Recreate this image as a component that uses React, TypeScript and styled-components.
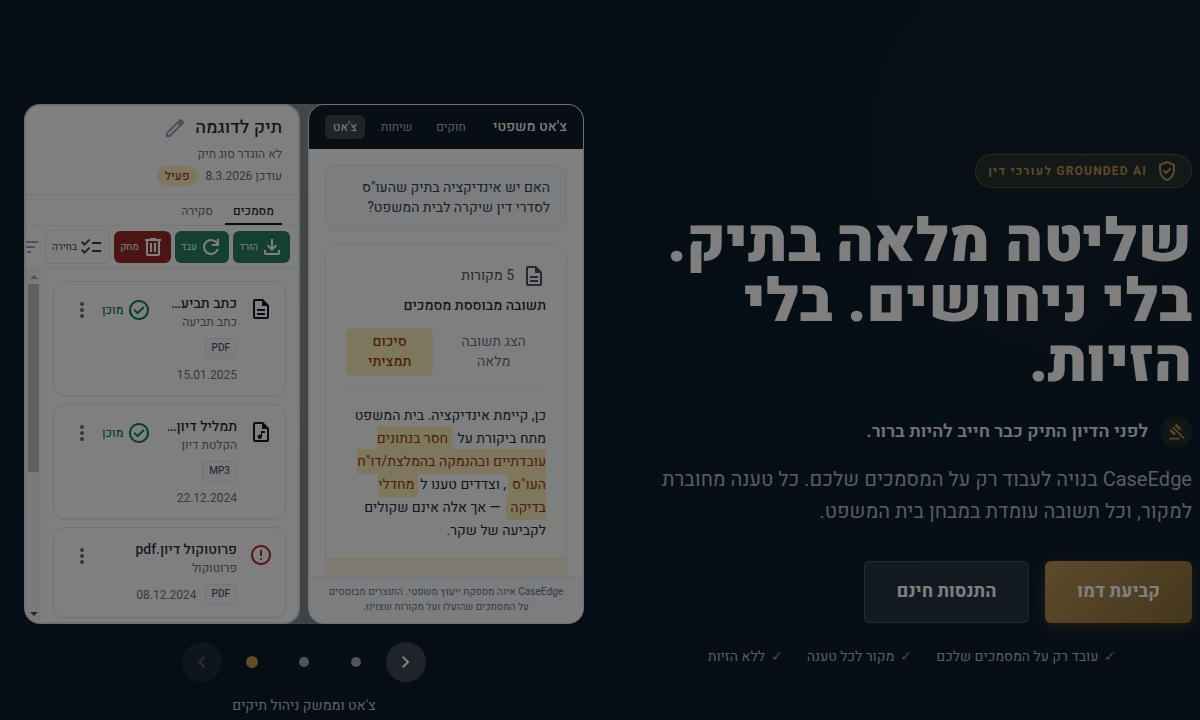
import React from "react";
import styled, { createGlobalStyle, css } from "styled-components";

const GlobalStyle = createGlobalStyle`
  *, *::before, *::after { box-sizing: border-box; }
  body {
    margin: 0;
    background: #0e1d2a;
    font-family: Heebo, Roboto, "Open Sans", sans-serif;
  }
  h1, h2, h3, p, ul { margin: 0; padding: 0; }
  ul { list-style: none; }
  button { font-family: inherit; border: 0; padding: 0; background: none; color: inherit; cursor: pointer; }
`;

const ICONS = {
  edit: "M200-200h57l391-391-57-57-391 391v57Zm-80 80v-170l528-527q12-11 26.5-17t30.5-6q16 0 31 6t26 18l55 56q12 11 17.5 26t5.5 30q0 16-5.5 30.5T817-647L290-120H120Zm640-584-56-56 56 56Zm-141 85-28-29 57 57-29-28Z",
  download: "M480-320 280-520l56-58 104 104v-326h80v326l104-104 56 58-200 200ZM240-160q-33 0-56.5-23.5T160-240v-120h80v120h480v-120h80v120q0 33-23.5 56.5T720-160H240Z",
  refresh: "M480-160q-134 0-227-93t-93-227q0-134 93-227t227-93q69 0 132 28.5T720-690v-110h80v280H520v-80h168q-32-56-87.5-88T480-720q-100 0-170 70t-70 170q0 100 70 170t170 70q77 0 139-44t87-116h84q-28 106-114 173t-196 67Z",
  trash: "M280-120q-33 0-56.5-23.5T200-200v-520h-40v-80h200v-40h240v40h200v80h-40v520q0 33-23.5 56.5T680-120H280Zm400-600H280v520h400v-520ZM360-280h80v-360h-80v360Zm160 0h80v-360h-80v360Z",
  checklist: "M222-200 80-342l56-56 85 85 170-170 56 57-225 226Zm0-320L80-662l56-56 85 85 170-170 56 57-225 226Zm298 240v-80h360v80H520Zm0-320v-80h360v80H520Z",
  filter: "M400-240v-80h160v80H400ZM240-440v-80h480v80H240ZM120-640v-80h720v80H120Z",
  document: "M320-240h320v-80H320v80Zm0-160h320v-80H320v80ZM240-80q-33 0-56.5-23.5T160-160v-640q0-33 23.5-56.5T240-880h320l240 240v480q0 33-23.5 56.5T720-80H240Zm280-520v-200H240v640h480v-440H520Z",
  audio: "M430-200q38 0 64-26t26-64v-150h120v-80H480v155q-11-8-23.5-11.5T430-380q-38 0-64 26t-26 64q0 38 26 64t64 26ZM240-80q-33 0-56.5-23.5T160-160v-640q0-33 23.5-56.5T240-880h320l240 240v480q0 33-23.5 56.5T720-80H240Zm280-520v-200H240v640h480v-440H520Z",
  check: "m424-296 282-282-56-56-226 226-114-114-56 56 170 170Zm56 216q-83 0-156-31.5T197-197q-54-54-85.5-127T80-480q0-83 31.5-156T197-763q54-54 127-85.5T480-880q83 0 156 31.5T763-763q54 54 85.5 127T880-480q0 83-31.5 156T763-197q-54 54-127 85.5T480-80Zm0-80q134 0 227-93t93-227q0-134-93-227t-227-93q-134 0-227 93t-93 227q0 134 93 227t227 93Z",
  error: "M480-280q17 0 28.5-11.5T520-320q0-17-11.5-28.5T480-360q-17 0-28.5 11.5T440-320q0 17 11.5 28.5T480-280Zm-40-160h80v-240h-80v240Zm40 360q-83 0-156-31.5T197-197q-54-54-85.5-127T80-480q0-83 31.5-156T197-763q54-54 127-85.5T480-880q83 0 156 31.5T763-763q54 54 85.5 127T880-480q0 83-31.5 156T763-197q-54 54-127 85.5T480-80Zm0-80q134 0 227-93t93-227q0-134-93-227t-227-93q-134 0-227 93t-93 227q0 134 93 227t227 93Z",
  more: "M480-160q-33 0-56.5-23.5T400-240q0-33 23.5-56.5T480-320q33 0 56.5 23.5T560-240q0 33-23.5 56.5T480-160Zm0-240q-33 0-56.5-23.5T400-480q0-33 23.5-56.5T480-560q33 0 56.5 23.5T560-480q0 33-23.5 56.5T480-400Zm0-240q-33 0-56.5-23.5T400-720q0-33 23.5-56.5T480-800q33 0 56.5 23.5T560-720q0 33-23.5 56.5T480-640Z",
  shield: "m438-338 226-226-57-57-169 169-84-84-57 57 141 141Zm42 258q-139-35-229.5-159.5T160-516v-244l320-120 320 120v244q0 152-90.5 276.5T480-80Zm0-84q104-33 172-132t68-220v-189l-240-90-240 90v189q0 121 68 220t172 132Z",
  gavel: "M160-120v-80h480v80H160Zm226-194L160-540l84-86 228 226-86 86Zm254-254L414-796l86-84 226 226-86 86Zm184 408L302-682l56-56 522 522-56 56Z",
  right: "M504-480 320-664l56-56 240 240-240 240-56-56 184-184Z",
  left: "M560-240 320-480l240-240 56 56-184 184 184 184-56 56Z",
};

type IconName = keyof typeof ICONS;

const Glyph = styled.svg`
  display: block;
  flex: none;
  fill: currentColor;
`;

const Icon = ({ name, size = 24 }: { name: IconName; size?: number }) => (
  <Glyph width={size} height={size} viewBox="0 -960 960 960" aria-hidden="true">
    <path d={ICONS[name]} />
  </Glyph>
);

const Backdrop = styled.div`
  position: fixed;
  inset: 0;
  z-index: 10;
  background: rgba(0, 0, 0, 0.5);
  pointer-events: none;
`;

const Hero = styled.main`
  min-height: 100vh;
  display: grid;
  grid-template-columns: minmax(0, 1fr) minmax(0, 1fr);
  column-gap: 48px;
  align-items: center;
  align-content: start;
  padding: 104px 8px 0 24px;
  overflow: hidden;
  color: #fff;
  background:
    radial-gradient(circle at 90% 20%, rgba(201, 162, 78, 0.03), transparent 30%),
    linear-gradient(135deg, #0e1e2b 0%, #0c1c2c 100%);
`;

const Pitch = styled.section`
  display: flex;
  flex-direction: column;
  align-items: flex-start;
`;

const Badge = styled.div`
  display: flex;
  align-items: center;
  gap: 8px;
  padding: 4px 12px;
  border: 1px solid rgba(201, 162, 78, 0.3);
  border-radius: 17px;
  background: rgba(201, 162, 78, 0.12);
  color: #b8934f;
  font-size: 12px;
  line-height: 24px;
  font-weight: 700;
  letter-spacing: 0.1em;
`;

const Headline = styled.h1`
  margin-top: 24px;
  font-size: 60px;
  line-height: 60px;
  font-weight: 900;
`;

const Lead = styled.div`
  display: flex;
  align-items: center;
  gap: 12px;
  margin-top: 24px;
  color: #e4e6e8;
  font-size: 18px;
  line-height: 28px;
  font-weight: 600;
`;

const LeadIcon = styled.span`
  display: grid;
  place-items: center;
  width: 32px;
  height: 32px;
  border-radius: 50%;
  background: rgba(201, 162, 78, 0.12);
  color: #b8934f;
`;

const Description = styled.p`
  margin-top: 16px;
  color: #b4b9be;
  font-size: 20px;
  line-height: 32px;
`;

const Actions = styled.div`
  display: flex;
  gap: 16px;
  margin-top: 33px;
`;

const Action = styled.button<{ $gold?: boolean }>`
  height: 62px;
  padding: 0 32px;
  border-radius: 6px;
  font-size: 18px;
  font-weight: 700;
  color: #fff;
  ${({ $gold }) =>
    $gold
      ? css`
          background: linear-gradient(135deg, #bb9659 0%, #8a6c3c 100%);
          box-shadow: 0 4px 16px rgba(201, 162, 78, 0.25);
        `
      : css`
          border: 1px solid rgba(255, 255, 255, 0.2);
          background: rgba(255, 255, 255, 0.1);
        `}
`;

const Promises = styled.ul`
  align-self: center;
  display: flex;
  gap: 24px;
  margin-top: 24px;
  color: #b4b9be;
  font-size: 14px;
  line-height: 20px;
`;

const Promise = styled.li`
  display: flex;
  gap: 6px;
  &::before { content: "✓"; color: #b8934f; }
`;

const Showcase = styled.section`
  display: flex;
  flex-direction: column;
`;

const Frame = styled.div`
  display: grid;
  grid-template-columns: minmax(0, 1fr) minmax(0, 1fr);
  gap: 8px;
  height: 520px;
  border-radius: 16px;
  overflow: hidden;
  background: linear-gradient(180deg, #868f94, #7c868e);
`;

const Pane = styled.article<{ $thick?: boolean }>`
  display: flex;
  flex-direction: column;
  min-height: 0;
  overflow: hidden;
  border: ${({ $thick }) => ($thick ? 2 : 1)}px solid #dde3ea;
  border-radius: 16px;
  background: #fff;
  color: #1e293b;
`;

/* Legal chat */

const ChatHeader = styled.header`
  flex: none;
  display: flex;
  align-items: center;
  justify-content: space-between;
  height: 44px;
  padding: 0 16px;
  background: #0e1c29;
  color: #fff;
`;

const ChatTitle = styled.h2`
  font-size: 14px;
  line-height: 20px;
  font-weight: 500;
`;

const ChatTabs = styled.nav`
  display: flex;
  gap: 8px;
`;

const ChatTab = styled.button<{ $active?: boolean }>`
  height: 24px;
  padding: 0 8px;
  border-radius: 6px;
  font-size: 12px;
  white-space: nowrap;
  color: ${({ $active }) => ($active ? "#fff" : "#b6bbc0")};
  background: ${({ $active }) => ($active ? "rgba(255, 255, 255, 0.2)" : "transparent")};
`;

const ChatBody = styled.div`
  flex: 1;
  min-height: 0;
  display: flex;
  flex-direction: column;
  gap: 12px;
  padding: 16px 16px 0;
  overflow: hidden;
`;

const Question = styled.p`
  flex: none;
  padding: 12px 16px;
  border: 1px solid #e2e8f0;
  border-radius: 12px;
  background: #f8fafc;
  color: #334155;
  font-size: 14px;
  line-height: 20px;
`;

const Answer = styled.div`
  flex: none;
  border: 1px solid #e8ebee;
  border-radius: 16px;
  overflow: hidden;
`;

const AnswerBody = styled.div`
  padding: 20px 20px 16px;
`;

const Sources = styled.div`
  display: flex;
  align-items: center;
  gap: 8px;
  color: #475569;
  font-size: 14px;
  line-height: 24px;
`;

const AnswerTitle = styled.h3`
  margin-top: 8px;
  font-size: 14px;
  line-height: 20px;
  font-weight: 500;
`;

const Modes = styled.div`
  display: grid;
  grid-template-columns: 6fr 5fr;
  gap: 8px;
  margin-top: 12px;
  padding-bottom: 12px;
  border-bottom: 1px solid #f1f3f5;
`;

const Mode = styled.button<{ $active?: boolean }>`
  padding: 4px 16px;
  border-radius: 6px;
  font-size: 14px;
  line-height: 20px;
  ${({ $active }) =>
    $active
      ? css`
          background: #fdeebc;
          color: #92400e;
          font-weight: 500;
        `
      : css`
          color: #64748b;
        `}
`;

const AnswerText = styled.p`
  margin-top: 15px;
  color: #1e293b;
  font-size: 14px;
  line-height: 23px;
`;

const Mark = styled.mark`
  margin: 0 2px;
  padding: 2px 4px;
  border-radius: 4px;
  background: #fdeebc;
  color: #92400e;
`;

const AnswerNote = styled.div`
  height: 40px;
  border-top: 1px solid #fde9a0;
  background: #fff7e6;
`;

const Disclaimer = styled.footer`
  flex: none;
  padding: 8px 16px;
  border-top: 1px solid #e8ecf0;
  background: #f8fafc;
  color: #64748b;
  font-size: 10px;
  line-height: 15px;
  text-align: center;
`;

/* Case file */

const CaseHeader = styled.header`
  flex: none;
  padding: 10px 16px 8px;
  border-bottom: 1px solid #e2e8f0;
`;

const CaseTitle = styled.div`
  display: flex;
  align-items: center;
  gap: 8px;
  color: #94a3b8;
`;

const CaseName = styled.h2`
  color: #1e293b;
  font-size: 18px;
  line-height: 24px;
  font-weight: 500;
`;

const CaseMeta = styled.div`
  display: flex;
  align-items: center;
  gap: 8px;
  margin-top: 4px;
  color: #64748b;
  font-size: 12px;
  line-height: 20px;

  & + & { margin-top: 2px; }
`;

const State = styled.span`
  padding: 0 8px;
  border-radius: 10px;
  background: #fdeebc;
  color: #92400e;
  font-weight: 500;
`;

const CaseTabs = styled.nav`
  flex: none;
  display: flex;
  gap: 4px;
  height: 31px;
  padding: 0 16px;
  border-bottom: 1px solid #eceff2;
`;

const CaseTab = styled.button<{ $active?: boolean }>`
  padding: 4px 8px 0;
  border-bottom: 2px solid ${({ $active }) => ($active ? "#0d1b2a" : "transparent")};
  color: ${({ $active }) => ($active ? "#1e293b" : "#64748b")};
  font-size: 12px;
  font-weight: ${({ $active }) => ($active ? 500 : 400)};
`;

const Toolbar = styled.div`
  flex: none;
  display: flex;
  align-items: center;
  gap: 4px;
  padding: 4px 8px;
  border-bottom: 1px solid #eceff2;
  overflow: hidden;
`;

const TOOL_TONES = {
  green: "height: 32px; padding: 0 6px; background: #288060; color: #fff;",
  red: "height: 32px; padding: 0 6px; background: #992b2b; color: #fff;",
  outline: "height: 34px; padding: 0 6px; background: #fff; color: #334155; border: 1px solid #e2e8f0;",
  plain: "height: 32px; color: #94a3b8;",
};

const Tool = styled.button<{ $tone: keyof typeof TOOL_TONES }>`
  flex: none;
  display: flex;
  align-items: center;
  gap: 2px;
  border-radius: 6px;
  font-size: 10px;
  white-space: nowrap;
  ${({ $tone }) => TOOL_TONES[$tone]}
`;

const ListArea = styled.div`
  flex: 1;
  min-height: 0;
  display: flex;
  overflow: hidden;
`;

const List = styled.ul`
  flex: 1;
  min-width: 0;
  display: flex;
  flex-direction: column;
  gap: 8px;
  padding: 12px;
`;

const Scrollbar = styled.div`
  flex: none;
  width: 15px;
  display: flex;
  flex-direction: column;
  align-items: center;
  justify-content: space-between;
  padding: 6px 2px 6px;
  background: #f4f4f4;
`;

const ScrollTop = styled.div`
  display: flex;
  flex-direction: column;
  align-items: center;
  gap: 5px;
`;

const ScrollArrow = styled.i<{ $down?: boolean }>`
  width: 0;
  height: 0;
  border: 4px solid transparent;
  border-top-width: ${({ $down }) => ($down ? 4 : 0)}px;
  border-bottom-width: ${({ $down }) => ($down ? 0 : 4)}px;
  ${({ $down }) => ($down ? "border-top-color: #505050;" : "border-bottom-color: #a3a3a3;")}
`;

const ScrollThumb = styled.div`
  width: 11px;
  height: 188px;
  background: #c1c1c1;
`;

const Doc = styled.li`
  flex: none;
  display: flex;
  align-items: flex-start;
  gap: 12px;
  padding: 12px 12px 12px 16px;
  border: 1px solid #e2e5e9;
  border-radius: 12px;
  box-shadow: 0 1px 2px rgba(0, 0, 0, 0.06);
`;

const DocIcon = styled.span<{ $error?: boolean }>`
  margin-top: 3px;
  color: ${({ $error }) => ($error ? "#b32828" : "#0d1b2a")};
`;

const DocInfo = styled.div`
  flex: 1;
  min-width: 0;
`;

const DocName = styled.h3`
  color: #1e293b;
  font-size: 14px;
  line-height: 20px;
  font-weight: 500;
  white-space: nowrap;
`;

const DocKind = styled.p`
  color: #64748b;
  font-size: 12px;
  line-height: 16px;
`;

const DocMeta = styled.div`
  display: flex;
  flex-wrap: wrap;
  align-items: center;
  gap: 8px;
  margin-top: 8px;
  color: #64748b;
  font-size: 12px;
  line-height: 16px;
`;

const Format = styled.span`
  padding: 0 6px;
  border: 1px solid #e2e8f0;
  border-radius: 5px;
  background: #f8fafc;
  color: #475569;
  font-size: 10px;
  line-height: 19px;
  font-weight: 500;
`;

const DocSide = styled.div`
  display: flex;
  align-items: center;
  gap: 8px;
  margin-top: 4px;
`;

const DocStatus = styled.span`
  display: flex;
  align-items: center;
  gap: 4px;
  color: #0b7f54;
  font-size: 12px;
  line-height: 24px;
  font-weight: 500;
`;

const DocMenu = styled.button`
  color: #64748b;
`;

/* Carousel controls */

const Carousel = styled.div`
  display: flex;
  align-items: center;
  justify-content: center;
  gap: 8px;
  margin-top: 16px;
`;

const Arrow = styled.button`
  display: grid;
  place-items: center;
  width: 40px;
  height: 40px;
  border-radius: 50%;
  background: #414855;
  color: #fff;

  &:disabled { opacity: 0.3; }
`;

const Dot = styled.button<{ $active?: boolean }>`
  display: grid;
  place-items: center;
  width: 44px;
  height: 44px;

  &::before {
    content: "";
    width: ${({ $active }) => ($active ? 12 : 10)}px;
    height: ${({ $active }) => ($active ? 12 : 10)}px;
    border-radius: 50%;
    background: ${({ $active }) => ($active ? "#c19b56" : "#a4a7ab")};
  }
`;

const Caption = styled.p`
  margin-top: 12px;
  color: #c0c4c8;
  font-size: 14px;
  line-height: 20px;
  text-align: center;
`;

interface DocumentEntry {
  icon: IconName;
  name: string;
  kind: string;
  format: string;
  date: string;
  ready: boolean;
}

const DOCUMENTS: DocumentEntry[] = [
  { icon: "document", name: "כתב תביע…", kind: "כתב תביעה", format: "PDF", date: "15.01.2025", ready: true },
  { icon: "audio", name: "תמליל דיון…", kind: "הקלטת דיון", format: "MP3", date: "22.12.2024", ready: true },
  { icon: "error", name: "פרוטוקול דיון.pdf", kind: "פרוטוקול", format: "PDF", date: "08.12.2024", ready: false },
];

const ChatPane = () => (
  <Pane>
    <ChatHeader>
      <ChatTitle>צ'אט משפטי</ChatTitle>
      <ChatTabs>
        <ChatTab>חוקים</ChatTab>
        <ChatTab>שיחות</ChatTab>
        <ChatTab $active>צ'אט</ChatTab>
      </ChatTabs>
    </ChatHeader>
    <ChatBody>
      <Question>האם יש אינדיקציה בתיק שהעו"ס לסדרי דין שיקרה לבית המשפט?</Question>
      <Answer>
        <AnswerBody>
          <Sources>
            <Icon name="document" />
            5 מקורות
          </Sources>
          <AnswerTitle>תשובה מבוססת מסמכים</AnswerTitle>
          <Modes>
            <Mode>הצג תשובה מלאה</Mode>
            <Mode $active>סיכום תמציתי</Mode>
          </Modes>
          <AnswerText>
            כן, קיימת אינדיקציה. בית המשפט מתח ביקורת על <Mark>חסר בנתונים עובדתיים ובהנמקה בהמלצת/דו"ח העו"ס</Mark>, וצדדים טענו ל<Mark>מחדלי בדיקה</Mark> — אך אלה אינם שקולים לקביעה של שקר.
          </AnswerText>
        </AnswerBody>
        <AnswerNote />
      </Answer>
    </ChatBody>
    <Disclaimer>CaseEdge אינה מספקת ייעוץ משפטי. התוצרים מבוססים על המסמכים שהועלו ועל מקורות שצוינו.</Disclaimer>
  </Pane>
);

const CasePane = () => (
  <Pane $thick>
    <CaseHeader>
      <CaseTitle>
        <CaseName>תיק לדוגמה</CaseName>
        <button aria-label="עריכה">
          <Icon name="edit" />
        </button>
      </CaseTitle>
      <CaseMeta>לא הוגדר סוג תיק</CaseMeta>
      <CaseMeta>
        עודכן 8.3.2026
        <State>פעיל</State>
      </CaseMeta>
    </CaseHeader>
    <CaseTabs>
      <CaseTab $active>מסמכים</CaseTab>
      <CaseTab>סקירה</CaseTab>
    </CaseTabs>
    <Toolbar>
      <Tool $tone="green"><Icon name="download" />הורד</Tool>
      <Tool $tone="green"><Icon name="refresh" />עבד</Tool>
      <Tool $tone="red"><Icon name="trash" />מחק</Tool>
      <Tool $tone="outline"><Icon name="checklist" />בחירה</Tool>
      <Tool $tone="plain" aria-label="סינון"><Icon name="filter" /></Tool>
    </Toolbar>
    <ListArea>
      <List>
        {DOCUMENTS.map((doc) => (
          <Doc key={doc.name}>
            <DocIcon $error={!doc.ready}><Icon name={doc.icon} /></DocIcon>
            <DocInfo>
              <DocName>{doc.name}</DocName>
              <DocKind>{doc.kind}</DocKind>
              <DocMeta>
                <Format>{doc.format}</Format>
                <time>{doc.date}</time>
              </DocMeta>
            </DocInfo>
            <DocSide>
              {doc.ready && <DocStatus><Icon name="check" />מוכן</DocStatus>}
              <DocMenu aria-label="פעולות"><Icon name="more" /></DocMenu>
            </DocSide>
          </Doc>
        ))}
      </List>
      <Scrollbar>
        <ScrollTop>
          <ScrollArrow />
          <ScrollThumb />
        </ScrollTop>
        <ScrollArrow $down />
      </Scrollbar>
    </ListArea>
  </Pane>
);

export default function App() {
  return (
    <>
      <GlobalStyle />
      <Hero dir="rtl" lang="he">
        <Pitch>
          <Badge>
            <Icon name="shield" />
            GROUNDED AI לעורכי דין
          </Badge>
          <Headline>שליטה מלאה בתיק. בלי ניחושים. בלי הזיות.</Headline>
          <Lead>
            <LeadIcon><Icon name="gavel" size={20} /></LeadIcon>
            לפני הדיון התיק כבר חייב להיות ברור.
          </Lead>
          <Description>
            CaseEdge בנויה לעבוד רק על המסמכים שלכם. כל טענה מחוברת למקור, וכל תשובה עומדת במבחן בית המשפט.
          </Description>
          <Actions>
            <Action $gold>קביעת דמו</Action>
            <Action>התנסות חינם</Action>
          </Actions>
          <Promises>
            <Promise>עובד רק על המסמכים שלכם</Promise>
            <Promise>מקור לכל טענה</Promise>
            <Promise>ללא הזיות</Promise>
          </Promises>
        </Pitch>
        <Showcase>
          <Frame>
            <ChatPane />
            <CasePane />
          </Frame>
          <Carousel>
            <Arrow aria-label="הקודם"><Icon name="right" /></Arrow>
            <Dot aria-label="שקופית 3" />
            <Dot aria-label="שקופית 2" />
            <Dot $active aria-label="שקופית 1" />
            <Arrow aria-label="הבא" disabled><Icon name="left" /></Arrow>
          </Carousel>
          <Caption>צ'אט וממשק ניהול תיקים</Caption>
        </Showcase>
      </Hero>
      <Backdrop />
    </>
  );
}
